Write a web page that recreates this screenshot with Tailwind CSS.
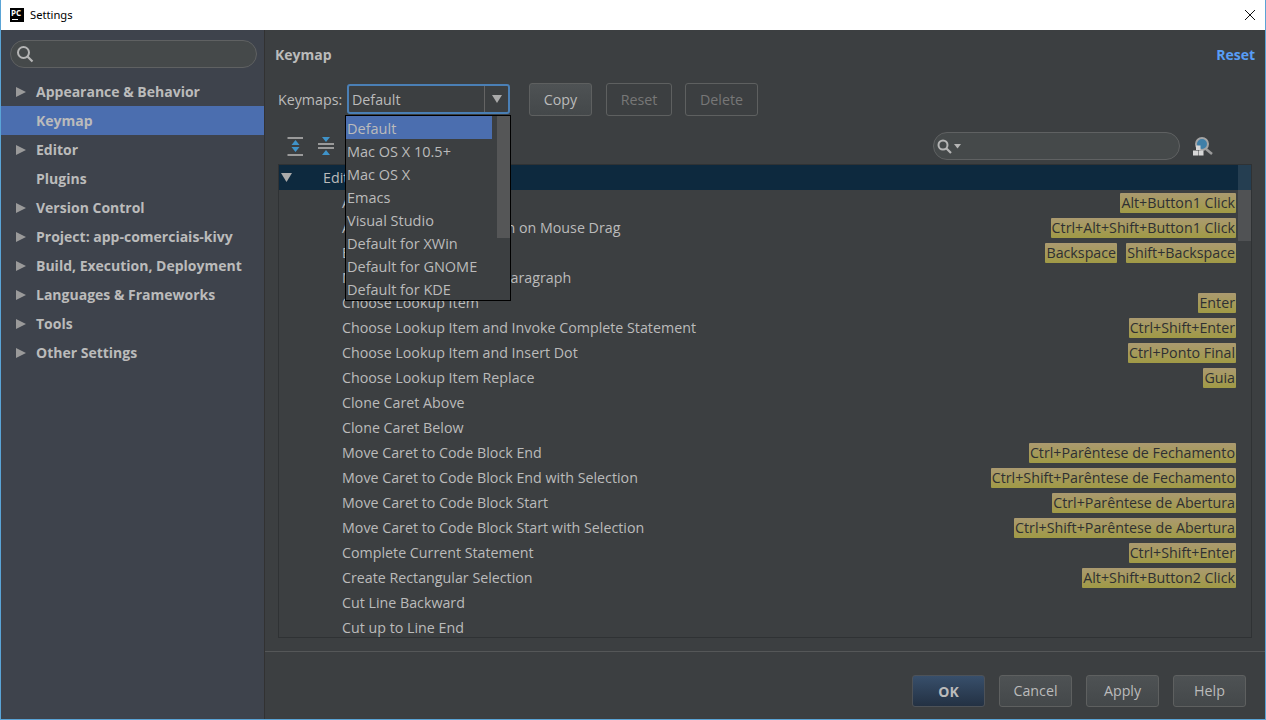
<!DOCTYPE html>
<html lang="en">
<head>
<meta charset="UTF-8">
<title>Settings</title>
<script src="https://cdn.jsdelivr.net/npm/@tailwindcss/browser@4"></script>
</head>
<body class="h-[720px] w-[1266px] overflow-hidden bg-[#3c3f41] font-['Open_Sans',sans-serif] text-[14.25px] text-[#bbbbbb]">
<div class="relative flex h-[720px] flex-col border-x border-b border-[#5aa4d6]">
  <!-- title bar -->
  <div class="flex h-[30px] shrink-0 items-center bg-white pl-[9px] pr-[9px] text-black">
    <div class="relative h-[14px] w-[14px] bg-black text-[8px] leading-[9px] font-bold text-white"><span class="pl-[1px]">PC</span><div class="absolute bottom-[2px] left-[2px] h-[1px] w-[6px] bg-white"></div></div>
    <span class="ml-[6px] font-['Noto_Sans',sans-serif] text-[11.2px]">Settings</span>
    <svg class="ml-auto" width="12" height="12" viewBox="0 0 12 12"><path d="M1 1 L11 11 M11 1 L1 11" stroke="#111" stroke-width="1"/></svg>
  </div>

  <div class="flex min-h-0 flex-1">
    <!-- sidebar -->
    <div class="w-[264px] shrink-0 border-r border-[#323232] bg-[#3e434c] pt-[10px]">
      <div class="mx-[9px] flex h-[28px] w-[247px] items-center rounded-full border border-[#5f6162] bg-[#45494a] pl-[6px]">
        <svg width="17" height="17" viewBox="0 0 17 17" fill="none"><circle cx="6.5" cy="6.5" r="5.5" stroke="#b5b5b5" stroke-width="2"/><path d="M10.5 10.5 L15.5 15.5" stroke="#b5b5b5" stroke-width="2.2"/></svg>
      </div>
      <div class="mt-[9px] text-[14px] font-bold">
        <div class="flex h-[29px] items-center"><svg class="ml-[15px] mr-[10px]" width="10" height="12" viewBox="0 0 10 12"><path d="M0 1 L10 6 L0 11Z" fill="#9a9a9a"/></svg>Appearance &amp; Behavior</div>
        <div class="flex h-[29px] items-center bg-[#4b6eaf] pl-[35px]">Keymap</div>
        <div class="flex h-[29px] items-center"><svg class="ml-[15px] mr-[10px]" width="10" height="12" viewBox="0 0 10 12"><path d="M0 1 L10 6 L0 11Z" fill="#9a9a9a"/></svg>Editor</div>
        <div class="flex h-[29px] items-center pl-[35px]">Plugins</div>
        <div class="flex h-[29px] items-center"><svg class="ml-[15px] mr-[10px]" width="10" height="12" viewBox="0 0 10 12"><path d="M0 1 L10 6 L0 11Z" fill="#9a9a9a"/></svg>Version Control</div>
        <div class="flex h-[29px] items-center"><svg class="ml-[15px] mr-[10px]" width="10" height="12" viewBox="0 0 10 12"><path d="M0 1 L10 6 L0 11Z" fill="#9a9a9a"/></svg>Project: app-comerciais-kivy</div>
        <div class="flex h-[29px] items-center"><svg class="ml-[15px] mr-[10px]" width="10" height="12" viewBox="0 0 10 12"><path d="M0 1 L10 6 L0 11Z" fill="#9a9a9a"/></svg>Build, Execution, Deployment</div>
        <div class="flex h-[29px] items-center"><svg class="ml-[15px] mr-[10px]" width="10" height="12" viewBox="0 0 10 12"><path d="M0 1 L10 6 L0 11Z" fill="#9a9a9a"/></svg>Languages &amp; Frameworks</div>
        <div class="flex h-[29px] items-center"><svg class="ml-[15px] mr-[10px]" width="10" height="12" viewBox="0 0 10 12"><path d="M0 1 L10 6 L0 11Z" fill="#9a9a9a"/></svg>Tools</div>
        <div class="flex h-[29px] items-center"><svg class="ml-[15px] mr-[10px]" width="10" height="12" viewBox="0 0 10 12"><path d="M0 1 L10 6 L0 11Z" fill="#9a9a9a"/></svg>Other Settings</div>
      </div>
    </div>

    <!-- main -->
    <div class="relative flex min-w-0 flex-1 flex-col">
      <div class="flex h-[50px] items-center justify-between pb-[2px] pl-[10px] pr-[10px] text-[14px] font-bold">
        <span>Keymap</span><span class="text-[#589df6]">Reset</span>
      </div>

      <div class="flex h-[38px] items-center pl-[13px]">
        <span class="w-[69px] pt-[2px]">Keymaps:</span>
        <div class="flex h-[30px] w-[163px] items-center rounded-[3px] border-2 border-[#4a7fb5] bg-[#3c3f41] pl-[3px]">
          <span class="flex-1 pt-[2px]">Default</span>
          <div class="flex h-full w-[24px] items-center justify-center border-l border-[#646464]"><svg width="10" height="8" viewBox="0 0 10 8"><path d="M0 0 H10 L5 8Z" fill="#aaaaaa"/></svg></div>
        </div>
        <div class="ml-[19px] flex h-[33px] w-[63px] items-center justify-center rounded-[3px] border border-[#5e6060] bg-[linear-gradient(#4e5254,#44484a)] pt-[2px]">Copy</div>
        <div class="ml-[14px] flex h-[33px] w-[66px] items-center justify-center rounded-[3px] border border-[#5e6060] pt-[2px] text-[#777777]">Reset</div>
        <div class="ml-[13px] flex h-[33px] w-[73px] items-center justify-center rounded-[3px] border border-[#5e6060] pt-[2px] text-[#777777]">Delete</div>
      </div>

      <div class="flex h-[46px] items-center pl-[21px] pr-[52px] pt-[10px]">
        <svg width="18" height="20" viewBox="0 0 18 20"><path d="M1.5 2 H17 M1.5 19 H17" stroke="#9a9a9a" stroke-width="2"/><path d="M9.5 4 L13.5 9 H5.5Z M5.5 11 H13.5 L9.5 16Z" fill="#3f93c9"/></svg>
        <svg class="ml-[13px]" width="18" height="20" viewBox="0 0 18 20"><path d="M1 8 H17 M1 12 H17" stroke="#9a9a9a" stroke-width="2"/><path d="M5 1 H13 L9 6Z M9 14 L13 19 H5Z" fill="#3f93c9"/></svg>
        <div class="ml-auto flex h-[28px] w-[247px] items-center rounded-full border border-[#5f6162] bg-[#45494a] pl-[3px]">
          <svg width="26" height="17" viewBox="0 0 26 17" fill="none"><circle cx="6" cy="7" r="4.5" stroke="#b5b5b5" stroke-width="2"/><path d="M9.5 10.5 L14 15" stroke="#b5b5b5" stroke-width="2.2"/><path d="M17 6 H24 L20.5 10.5Z" fill="#b5b5b5"/></svg>
        </div>
        <svg class="ml-[13px]" width="20" height="20" viewBox="0 0 20 20" fill="none"><path d="M13 13 L19 18" stroke="#9a9a9a" stroke-width="2.5"/><circle cx="9" cy="8" r="6" fill="#3f7fa8" stroke="#a4a4a4" stroke-width="2"/><rect x="0" y="14.5" width="5" height="5" fill="#d6d6d6"/><rect x="5.5" y="14.5" width="5" height="5" fill="#d6d6d6"/><rect x="3" y="9.5" width="4.5" height="4.5" fill="#d6d6d6"/></svg>
      </div>

      <!-- tree -->
      <div class="relative ml-[13px] mr-[13px] h-[474px] overflow-hidden border border-[#2f3234]">
        <div class="flex h-[25px] items-center bg-[#0d293e] pl-[2px]">
          <svg width="11" height="9" viewBox="0 0 11 9"><path d="M0 0 H11 L5.5 9Z" fill="#aaaaaa"/></svg><span class="ml-[31px]">Editor Actions</span>
        </div>
        <div class="flex h-[25px] items-center justify-between pl-[63px] pr-[15px]"><span>Add or Remove Caret</span><span class="flex gap-[9px]"><kbd class="rounded-[1px] bg-[linear-gradient(#ab9a70,#a09a45)] px-[1px] font-['Open_Sans',sans-serif] leading-[20px] text-[#2f3032]">Alt+Button1 Click</kbd></span></div>
        <div class="flex h-[25px] items-center justify-between pl-[63px] pr-[15px]"><span>Add Rectangular Selection on Mouse Drag</span><span class="flex gap-[9px]"><kbd class="rounded-[1px] bg-[linear-gradient(#ab9a70,#a09a45)] px-[1px] font-['Open_Sans',sans-serif] leading-[20px] text-[#2f3032]">Ctrl+Alt+Shift+Button1 Click</kbd></span></div>
        <div class="flex h-[25px] items-center justify-between pl-[63px] pr-[15px]"><span>Backspace</span><span class="flex gap-[9px]"><kbd class="rounded-[1px] bg-[linear-gradient(#ab9a70,#a09a45)] px-[1px] font-['Open_Sans',sans-serif] leading-[20px] text-[#2f3032]">Backspace</kbd><kbd class="rounded-[1px] bg-[linear-gradient(#ab9a70,#a09a45)] px-[1px] font-['Open_Sans',sans-serif] leading-[20px] text-[#2f3032]">Shift+Backspace</kbd></span></div>
        <div class="flex h-[25px] items-center justify-between pl-[63px] pr-[15px]"><span>Move Caret Backward a Paragraph</span></div>
        <div class="flex h-[25px] items-center justify-between pl-[63px] pr-[15px]"><span>Choose Lookup Item</span><span class="flex gap-[9px]"><kbd class="rounded-[1px] bg-[linear-gradient(#ab9a70,#a09a45)] px-[1px] font-['Open_Sans',sans-serif] leading-[20px] text-[#2f3032]">Enter</kbd></span></div>
        <div class="flex h-[25px] items-center justify-between pl-[63px] pr-[15px]"><span>Choose Lookup Item and Invoke Complete Statement</span><span class="flex gap-[9px]"><kbd class="rounded-[1px] bg-[linear-gradient(#ab9a70,#a09a45)] px-[1px] font-['Open_Sans',sans-serif] leading-[20px] text-[#2f3032]">Ctrl+Shift+Enter</kbd></span></div>
        <div class="flex h-[25px] items-center justify-between pl-[63px] pr-[15px]"><span>Choose Lookup Item and Insert Dot</span><span class="flex gap-[9px]"><kbd class="rounded-[1px] bg-[linear-gradient(#ab9a70,#a09a45)] px-[1px] font-['Open_Sans',sans-serif] leading-[20px] text-[#2f3032]">Ctrl+Ponto Final</kbd></span></div>
        <div class="flex h-[25px] items-center justify-between pl-[63px] pr-[15px]"><span>Choose Lookup Item Replace</span><span class="flex gap-[9px]"><kbd class="rounded-[1px] bg-[linear-gradient(#ab9a70,#a09a45)] px-[1px] font-['Open_Sans',sans-serif] leading-[20px] text-[#2f3032]">Guia</kbd></span></div>
        <div class="flex h-[25px] items-center pl-[63px]">Clone Caret Above</div>
        <div class="flex h-[25px] items-center pl-[63px]">Clone Caret Below</div>
        <div class="flex h-[25px] items-center justify-between pl-[63px] pr-[15px]"><span>Move Caret to Code Block End</span><kbd class="rounded-[1px] bg-[linear-gradient(#ab9a70,#a09a45)] px-[1px] font-['Open_Sans',sans-serif] leading-[20px] text-[#2f3032]">Ctrl+Parêntese de Fechamento</kbd></div>
        <div class="flex h-[25px] items-center justify-between pl-[63px] pr-[15px]"><span>Move Caret to Code Block End with Selection</span><kbd class="rounded-[1px] bg-[linear-gradient(#ab9a70,#a09a45)] px-[1px] font-['Open_Sans',sans-serif] leading-[20px] text-[#2f3032]">Ctrl+Shift+Parêntese de Fechamento</kbd></div>
        <div class="flex h-[25px] items-center justify-between pl-[63px] pr-[15px]"><span>Move Caret to Code Block Start</span><kbd class="rounded-[1px] bg-[linear-gradient(#ab9a70,#a09a45)] px-[1px] font-['Open_Sans',sans-serif] leading-[20px] text-[#2f3032]">Ctrl+Parêntese de Abertura</kbd></div>
        <div class="flex h-[25px] items-center justify-between pl-[63px] pr-[15px]"><span>Move Caret to Code Block Start with Selection</span><kbd class="rounded-[1px] bg-[linear-gradient(#ab9a70,#a09a45)] px-[1px] font-['Open_Sans',sans-serif] leading-[20px] text-[#2f3032]">Ctrl+Shift+Parêntese de Abertura</kbd></div>
        <div class="flex h-[25px] items-center justify-between pl-[63px] pr-[15px]"><span>Complete Current Statement</span><kbd class="rounded-[1px] bg-[linear-gradient(#ab9a70,#a09a45)] px-[1px] font-['Open_Sans',sans-serif] leading-[20px] text-[#2f3032]">Ctrl+Shift+Enter</kbd></div>
        <div class="flex h-[25px] items-center justify-between pl-[63px] pr-[15px]"><span>Create Rectangular Selection</span><kbd class="rounded-[1px] bg-[linear-gradient(#ab9a70,#a09a45)] px-[1px] font-['Open_Sans',sans-serif] leading-[20px] text-[#2f3032]">Alt+Shift+Button2 Click</kbd></div>
        <div class="flex h-[25px] items-center pl-[63px]">Cut Line Backward</div>
        <div class="flex h-[25px] items-center pl-[63px]">Cut up to Line End</div>
        <!-- scrollbar -->
        <div class="absolute right-0 top-0 h-[76px] w-[13px] bg-white/10"></div>
      </div>

      <div class="mt-[13px] h-[1px] bg-[#555758]"></div>
      <div class="flex flex-1 items-start justify-end gap-[14px] pr-[19px] pt-[23px]">
        <div class="flex h-[32px] w-[73px] items-center justify-center rounded-[3px] border border-[#4d5258] bg-[linear-gradient(#384f6b,#233143)] text-[14px] font-bold">OK</div>
        <div class="flex h-[32px] w-[73px] items-center justify-center rounded-[3px] border border-[#5e6060] bg-[linear-gradient(#4e5254,#44484a)]">Cancel</div>
        <div class="flex h-[32px] w-[73px] items-center justify-center rounded-[3px] border border-[#5e6060] bg-[linear-gradient(#4e5254,#44484a)]">Apply</div>
        <div class="flex h-[32px] w-[73px] items-center justify-center rounded-[3px] border border-[#5e6060] bg-[linear-gradient(#4e5254,#44484a)]">Help</div>
      </div>

      <!-- dropdown -->
      <div class="absolute left-[80px] top-[85px] h-[186px] w-[166px] overflow-hidden border border-black bg-[#3c3f41] text-[14.5px]">
        <div class="flex h-[23px] w-[146px] items-center bg-[#4b6eaf] pl-[1px] pt-[2px]">Default</div>
        <div class="flex h-[23px] items-center pl-[1px] pt-[2px]">Mac OS X 10.5+</div>
        <div class="flex h-[23px] items-center pl-[1px] pt-[2px]">Mac OS X</div>
        <div class="flex h-[23px] items-center pl-[1px] pt-[2px]">Emacs</div>
        <div class="flex h-[23px] items-center pl-[1px] pt-[2px]">Visual Studio</div>
        <div class="flex h-[23px] items-center pl-[1px] pt-[2px]">Default for XWin</div>
        <div class="flex h-[23px] items-center pl-[1px] pt-[2px]">Default for GNOME</div>
        <div class="flex h-[23px] items-center pl-[1px] pt-[2px]">Default for KDE</div>
        <div class="absolute right-0 top-0 h-[122px] w-[13px] bg-[#555657]"></div>
      </div>
    </div>
  </div>
</div>
</body>
</html>
